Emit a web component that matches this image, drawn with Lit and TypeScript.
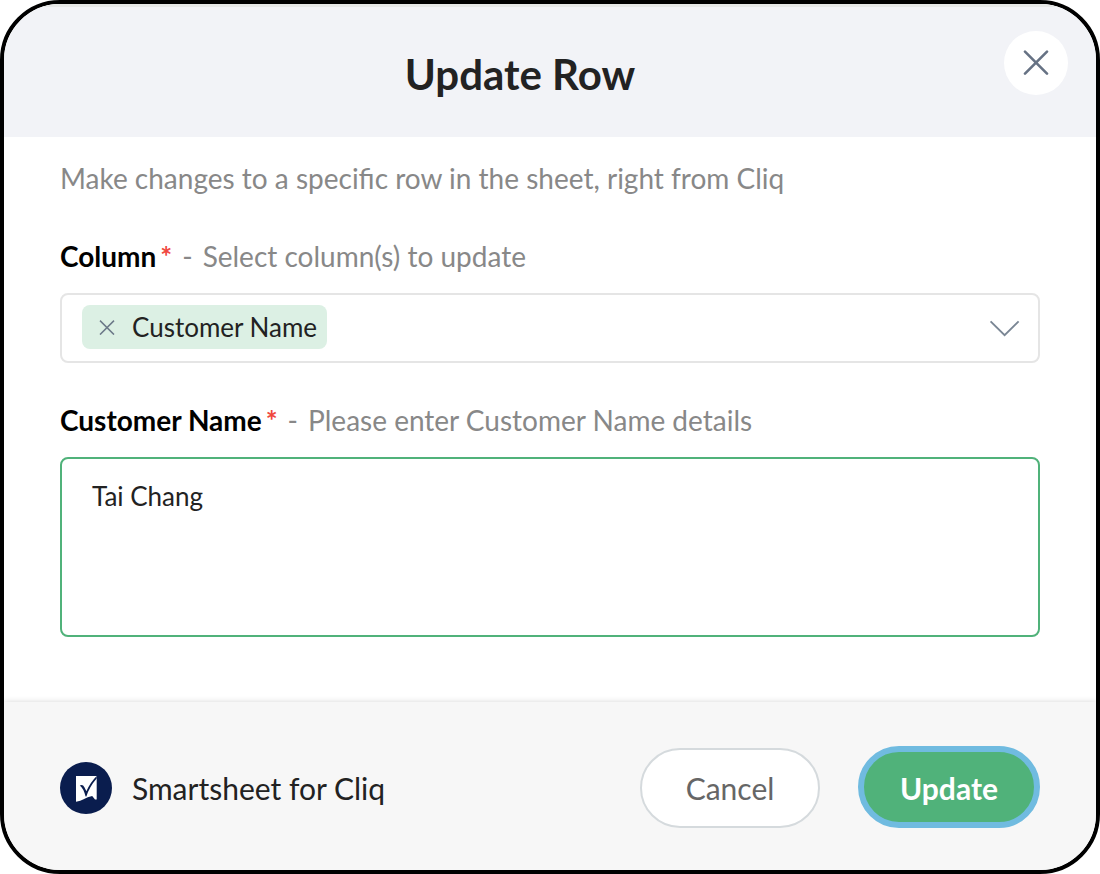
import { LitElement, html, css } from "lit";
import { customElement, state } from "lit/decorators.js";

@customElement("app-root")
export class AppRoot extends LitElement {
  static styles = css`
    :host {
      display: block;
      font-family: Lato, "Open Sans", sans-serif;
      font-size: 28px;
      line-height: 34px;
      color: #222;
      background: #fff;
    }
    * {
      box-sizing: border-box;
    }
    button,
    select,
    textarea {
      font: inherit;
      color: inherit;
      margin: 0;
      outline: none;
    }
    button {
      cursor: pointer;
    }
    .dialog {
      display: flex;
      flex-direction: column;
      min-height: 100vh;
      border: 4px solid #000;
      border-radius: 60px;
      overflow: hidden;
      background: #fff;
    }
    .header {
      display: flex;
      align-items: flex-start;
      padding: 24px 28px 36px 60px;
      border-top: 3px solid #e6e8e7;
      background: #f2f3f7;
    }
    .title {
      flex: 1;
      margin: 0;
      padding-top: 16px;
      padding-right: 28px;
      font-size: 42px;
      line-height: 54px;
      font-weight: 700;
      text-align: center;
    }
    .close {
      display: grid;
      place-items: center;
      width: 64px;
      height: 64px;
      padding: 0;
      border: 0;
      border-radius: 50%;
      background: #fff;
    }
    .body {
      flex: 1;
      padding: 24px 56px 64px;
    }
    .description {
      margin: 0 0 44px;
      color: #888;
    }
    .field + .field {
      margin-top: 40px;
    }
    .caption {
      display: flex;
      margin-bottom: 20px;
      color: #888;
    }
    .label {
      font-weight: 700;
      color: #000;
    }
    .required {
      margin: 0 10px 0 4px;
      font-weight: 700;
      color: #f0483e;
    }
    .hint {
      margin-left: 10px;
    }
    .picker {
      display: flex;
      align-items: center;
      height: 70px;
      padding: 0 0 2px 20px;
      border: 2px solid #e5e5e5;
      border-radius: 8px;
    }
    .tag {
      display: flex;
      align-items: center;
      height: 44px;
      padding-right: 10px;
      border-radius: 8px;
      background: #dcf0e4;
      font-size: 26px;
    }
    .remove {
      display: grid;
      place-items: center;
      width: 50px;
      height: 44px;
      padding: 0;
      border: 0;
      background: none;
    }
    .choice {
      flex: 1;
      display: grid;
      align-items: center;
      justify-items: end;
      height: 100%;
    }
    .select,
    .chevron {
      grid-area: 1 / 1;
    }
    .select {
      appearance: none;
      width: 100%;
      height: 100%;
      border: 0;
      background: none;
    }
    .chevron {
      margin-right: 18px;
      pointer-events: none;
    }
    .textarea {
      display: block;
      width: 100%;
      height: 180px;
      padding: 20px 30px;
      border: 2px solid #50b27a;
      border-radius: 8px;
      background: #fff;
      font-size: 26px;
      resize: none;
    }
    .footer {
      display: flex;
      align-items: flex-end;
      padding: 44px 56px 42px;
      background: #f7f7f7;
      box-shadow: 0 0 6px rgba(0, 0, 0, 0.16);
    }
    .app {
      flex: 1;
      display: flex;
      align-items: center;
      gap: 20px;
      height: 80px;
      font-size: 30px;
    }
    .actions {
      display: flex;
      align-items: flex-end;
      gap: 38px;
      font-size: 30px;
    }
    .cancel,
    .update {
      height: 80px;
      border-radius: 40px;
    }
    .cancel {
      width: 180px;
      border: 2px solid #d5dadd;
      background: #fff;
      color: #666;
    }
    .update {
      width: 182px;
      height: 82px;
      padding: 2px 0 0;
      border: 6px solid #70bbe0;
      border-radius: 41px;
      background: #50b27a;
      color: #fff;
      font-weight: 700;
    }
  `;

  @state() private columns = ["Customer Name"];

  private remove(name: string) {
    this.columns = this.columns.filter((c) => c !== name);
  }

  render() {
    return html`
      <form class="dialog" role="dialog" aria-labelledby="title" @submit=${(e: Event) => e.preventDefault()}>
        <header class="header">
          <h1 class="title" id="title">Update Row</h1>
          <button class="close" type="button" aria-label="Close">
            <svg width="26" height="26" viewBox="0 0 26 26" fill="none" stroke="#667284" stroke-width="2.6" stroke-linecap="round">
              <path d="M2 1.6 24 23.6M24 1.6 2 23.6" />
            </svg>
          </button>
        </header>
        <main class="body">
          <p class="description">Make changes to a specific row in the sheet, right from Cliq</p>
          <div class="field">
            <div class="caption">
              <label class="label" for="column">Column</label>
              <span class="required">*</span>
              <span>-</span>
              <span class="hint">Select column(s) to update</span>
            </div>
            <div class="picker">
              ${this.columns.map(
                (name) => html`
                  <span class="tag">
                    <button class="remove" type="button" aria-label="Remove" @click=${() => this.remove(name)}>
                      <svg width="16" height="16" viewBox="0 0 16 16" fill="none" stroke="#6c7989" stroke-width="1.5">
                        <path d="M1 1.6 15 15.6M15 1.6 1 15.6" />
                      </svg>
                    </button>
                    ${name}
                  </span>
                `
              )}
              <span class="choice">
                <select class="select" id="column">
                  <option value=""></option>
                </select>
                <svg class="chevron" width="32" height="20" viewBox="0 0 32 20" fill="none" stroke="#7a8694" stroke-width="1.9">
                  <path d="M2.6 4.4 16.6 18.2 30.6 4.4" />
                </svg>
              </span>
            </div>
          </div>
          <div class="field">
            <div class="caption">
              <label class="label" for="details">Customer Name</label>
              <span class="required">*</span>
              <span>-</span>
              <span class="hint">Please enter Customer Name details</span>
            </div>
            <textarea class="textarea" id="details" .value=${"Tai Chang"}></textarea>
          </div>
        </main>
        <footer class="footer">
          <div class="app">
            <svg width="52" height="52" viewBox="0 0 52 52" aria-hidden="true">
              <circle cx="26" cy="26" r="26" fill="#0a1d4e" />
              <path fill="#fff" d="M16 14H36.7V37.4H35L32.2 34Q27.6 34.8 23.6 37.2 20.6 38.8 16 39.8Z" />
              <path fill="#0a1d4e" d="M19.8 23.4Q22.8 21.8 24.4 25.2L26.4 29.2Q30 20.8 36.7 14V16.6Q29.6 24.6 26.4 34.4H25.6Q23.4 26 19.8 23.4Z" />
            </svg>
            <span>Smartsheet for Cliq</span>
          </div>
          <div class="actions">
            <button class="cancel" type="button">Cancel</button>
            <button class="update" type="submit">Update</button>
          </div>
        </footer>
      </form>
    `;
  }
}
